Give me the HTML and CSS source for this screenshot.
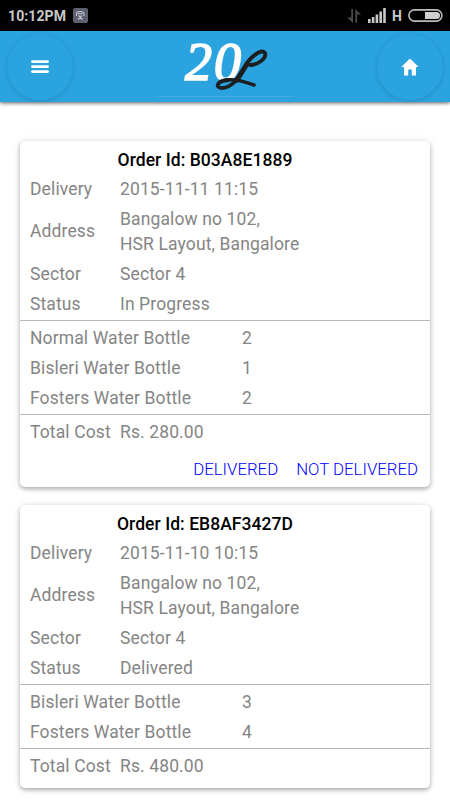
FILE: index.html
```html
<!DOCTYPE html>
<html lang="en">
<head>
<meta charset="utf-8">
<title>Orders</title>
<link rel="stylesheet" href="styles.css">
</head>
<body>
<div class="status-bar">
  <span class="clock">10:12PM</span>
  <svg class="notice" width="15" height="15" viewBox="0 0 15 15"><rect width="15" height="15" rx="2" fill="#5b5f70"/><path d="M3.500 8V6Q3.500 3.500 7.200 3.500T11 6V8M5 11.500L9 7.500M9.500 11.500L5.500 7.500M5 5.700h4.500" fill="none" stroke="#c9cbd2" stroke-width="1.100"/></svg>
  <svg class="transfer" width="14" height="14" viewBox="0 0 14 14"><path d="M4.200 0H6v14L0 8.500h4.200zM8.300 14h1.800V5.500H14L8.300 0z" fill="#494949"/></svg>
  <svg class="signal" width="18" height="15" viewBox="0 0 18 15"><path d="M0 11h2.600v4H0zM3.800 9h2.600v6H3.800zM7.600 6.500h2.600v8.500H7.600zM11.400 3.500H14V15h-2.600zM15.200 0h2.600v15h-2.600z" fill="#c8c8c8"/></svg>
  <span class="network">H</span>
  <svg class="battery" width="35" height="13" viewBox="0 0 35 13"><rect x=".9" y=".9" width="33" height="11.200" rx="5.600" fill="none" stroke="#bdbdbd" stroke-width="1.600"/><path d="M17 3h11.500a3.500 3.500 0 0 1 0 7H17z" fill="#d0d0d0"/></svg>
</div>
<header class="toolbar">
  <button class="round" aria-label="Menu"><svg width="18" height="14" viewBox="0 0 18 14"><path d="M1.400 1.600h15.200M1.400 6.600h15.200M1.400 11.600h15.200" stroke="#fff" stroke-width="2.700" stroke-linecap="round"/></svg></button>
  <svg class="logo" width="140" height="71" viewBox="0 0 140 71">
    <path d="M3 65.500h136" stroke="#45ace2" stroke-width="1"/>
    <text class="logo-number" transform="translate(30 48.500)"><tspan x="0">2</tspan><tspan x="29">0</tspan></text>
    <g fill="none" stroke="#1d1f21" stroke-linejoin="round" stroke-linecap="round">
      <path d="M95 34C103 34 112 27 110 22C106 17 94 27 89 37C82 49 77 57 66 57C60 56 62 50 73 49" stroke-width="3.800"/>
      <path d="M71 49C84 47 91 52 99 54" stroke-width="3.500"/>
      <path d="M92 33L82 49" stroke-width="5"/>
    </g>
  </svg>
  <button class="round" aria-label="Home"><svg width="18" height="18" viewBox="0 0 18 18"><path d="M9 .5L.3 9H3v8.500h4.200v-6h3.600v6H15V9h2.700z" fill="#fff"/></svg></button>
</header>
<main class="orders">
  <article class="card">
    <h2>Order Id: B03A8E1889</h2>
    <dl class="details">
      <dt>Delivery</dt><dd>2015-11-11 11:15</dd>
      <dt>Address</dt><dd>Bangalow no 102,<br>HSR Layout, Bangalore</dd>
      <dt>Sector</dt><dd>Sector 4</dd>
      <dt>Status</dt><dd>In Progress</dd>
    </dl>
    <dl class="items">
      <dt>Normal Water Bottle</dt><dd>2</dd>
      <dt>Bisleri Water Bottle</dt><dd>1</dd>
      <dt>Fosters Water Bottle</dt><dd>2</dd>
    </dl>
    <dl class="details total"><dt>Total Cost</dt><dd>Rs. 280.00</dd></dl>
    <div class="actions"><a>DELIVERED</a><a>NOT DELIVERED</a></div>
  </article>
  <article class="card">
    <h2>Order Id: EB8AF3427D</h2>
    <dl class="details">
      <dt>Delivery</dt><dd>2015-11-10 10:15</dd>
      <dt>Address</dt><dd>Bangalow no 102,<br>HSR Layout, Bangalore</dd>
      <dt>Sector</dt><dd>Sector 4</dd>
      <dt>Status</dt><dd>Delivered</dd>
    </dl>
    <dl class="items">
      <dt>Bisleri Water Bottle</dt><dd>3</dd>
      <dt>Fosters Water Bottle</dt><dd>4</dd>
    </dl>
    <dl class="details total"><dt>Total Cost</dt><dd>Rs. 480.00</dd></dl>
  </article>
</main>
</body>
</html>
```
FILE: styles.css
```css
* { box-sizing: border-box; }
body { margin: 0; height: 800px; overflow: hidden; background: #fff; font-family: Roboto, sans-serif; }
.status-bar { height: 31px; background: #000; color: #c8c8c8; display: flex; align-items: center; padding: 0 7px 0 8px; font-size: 14px; font-weight: 700; }
.clock { width: 65px; white-space: nowrap; letter-spacing: .1px; }
.transfer { margin-left: auto; }
.signal { margin: 0 6px 0 7px; }
.network { width: 10px; font-size: 14px; }
.battery { margin-left: 6px; }
.toolbar { height: 71px; background: #2aa3df; display: flex; align-items: center; justify-content: space-between; padding: 0 7px 0 7px; box-shadow: 0 1px 4px rgba(0,0,0,.65); }
.round { width: 66px; height: 66px; padding: 0; border: 0; border-radius: 50%; background: #2aa3df; box-shadow: 0 1px 4px rgba(0,50,90,.2); display: flex; align-items: center; justify-content: center; }
.logo-number { font: italic 400 54px "Liberation Serif", serif; fill: #fff; stroke: #fff; stroke-width: 1.700px; }
.orders { padding: 39px 20px 0; display: flex; flex-direction: column; gap: 18px; }
.card { background: #fff; border-radius: 5px; padding: 4px 0 7px; box-shadow: 0 2px 4px rgba(0,0,0,.3), 0 0 10px rgba(0,0,0,.08); color: #858585; font-size: 17.5px; line-height: 25px; letter-spacing: .12px; }
h2 { margin: 0; padding-right: 40px; height: 29px; line-height: 31px; text-align: center; color: #000; font-size: 17.500px; font-weight: 500; letter-spacing: .05px; }
dl { margin: 0; display: grid; align-items: center; padding: 0 10px; }
dt, dd { margin: 0; padding: 2.500px 0; white-space: nowrap; }
.details { grid-template-columns: 90px 1fr; }
.items { grid-template-columns: 212px 1fr; margin-top: 1px; padding-top: 2px; padding-bottom: 1px; border-top: 1px solid #b9b9b9; }
.total { border-top: 1px solid #b9b9b9; padding-top: 2px; }
.actions { height: 33px; display: flex; justify-content: flex-end; align-items: center; gap: 18px; padding: 11px 12px 0 0; color: #00f; font-size: 16.800px; font-weight: 300; letter-spacing: 0; }
```
